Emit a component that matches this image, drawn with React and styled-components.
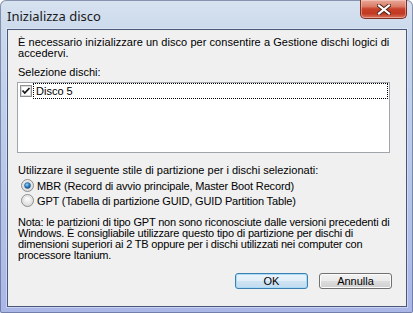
import React from "react";
import styled, { createGlobalStyle } from "styled-components";

const GlobalStyle = createGlobalStyle`
  html, body {
    margin: 0;
    padding: 0;
    background: #ffffff;
  }
`;

const Window = styled.div`
  width: 413px;
  height: 313px;
  box-sizing: border-box;
  display: flex;
  flex-direction: column;
  padding: 0 6px 6px 7px;
  border-radius: 6px 6px 2px 2px;
  background: linear-gradient(180deg, #d7e2ef 0%, #c9d8ec 12%, #bccbea 45%, #aab6e6 100%);
  box-shadow: inset 0 0 0 1px rgba(70, 82, 120, 0.55);
  font-family: "Liberation Sans", Arial, sans-serif;
`;

const TitleBar = styled.div`
  height: 29px;
  flex: none;
  display: flex;
  align-items: flex-start;
`;

const Title = styled.span`
  margin-top: 8px;
  font-family: "Noto Sans", "Open Sans", sans-serif;
  font-size: 13px;
  line-height: 16px;
  color: #1a1a1a;
`;

const CloseButton = styled.div`
  margin-left: auto;
  width: 47px;
  height: 19px;
  box-sizing: border-box;
  display: flex;
  align-items: center;
  justify-content: center;
  border: 1px solid #7c2f22;
  border-top: none;
  border-radius: 0 0 5px 5px;
  background: linear-gradient(180deg, #e9a999 0%, #dc7e69 35%, #c8412a 50%, #c23a22 75%, #d8735d 100%);
  box-shadow: inset 0 0 0 1px rgba(255, 220, 210, 0.45);
`;

const Client = styled.div`
  flex: 1;
  display: flex;
  flex-direction: column;
  box-sizing: border-box;
  padding: 7px 16px 0 9px;
  background: #f0f0f0;
  border: 1px solid #4a5878;
  box-shadow: 0 0 0 1px rgba(230, 235, 255, 0.55);
`;

const Text = styled.div`
  padding-left: 1px;
  font-size: 11px;
  line-height: 11px;
  color: #000000;
  white-space: nowrap;
  letter-spacing: ${(p) => p.$ls || 0}px;
  margin-top: ${(p) => p.$mt || 0}px;
`;

const ListBox = styled.div`
  margin-top: 4px;
  height: 71px;
  box-sizing: border-box;
  border: 1px solid #a0a4ab;
  background: #ffffff;
  padding: 0 1px 0 2px;
`;

const ListRow = styled.div`
  display: flex;
  align-items: center;
  height: 16px;
  gap: 1px;
`;

const FocusLabel = styled.div`
  flex: 1;
  height: 16px;
  box-sizing: border-box;
  border: 1px dotted #000000;
  padding-left: 2px;
  font-size: 11px;
  line-height: 14px;
`;

const RadioRow = styled.div`
  display: flex;
  align-items: center;
  height: 15px;
  gap: 3px;
  padding-left: 4px;
  font-size: 11px;
  letter-spacing: -0.15px;
  white-space: nowrap;
  margin-top: ${(p) => p.$mt || 0}px;
`;

const ButtonRow = styled.div`
  display: flex;
  justify-content: flex-end;
  gap: 11px;
  margin-top: 12px;
  margin-right: -2px;
`;

const Button = styled.div`
  width: 73px;
  height: 16px;
  box-sizing: border-box;
  display: flex;
  align-items: center;
  justify-content: center;
  border: 1px solid ${(p) => (p.$default ? "#3c7fb1" : "#707070")};
  border-radius: 3px;
  font-size: 11px;
  color: #000000;
  background: ${(p) =>
    p.$default
      ? "linear-gradient(180deg, #eaf4fb 0%, #e2eef8 48%, #cfe3f3 52%, #c4dcf0 100%)"
      : "linear-gradient(180deg, #f2f2f2 0%, #ebebeb 48%, #dddddd 52%, #cfcfcf 100%)"};
  box-shadow: inset 0 0 0 1px ${(p) => (p.$default ? "#a9dcf6" : "#fcfcfc")};
`;

function CheckBox() {
  return (
    <svg width="12" height="12" viewBox="0 0 12 12">
      <rect x="0.5" y="0.5" width="11" height="11" fill="#f4f4f4" stroke="#8e8f8f" />
      <rect x="1.5" y="1.5" width="9" height="9" fill="#ffffff" stroke="#dcdcdc" />
      <path d="M2.5 5.5 L4.8 8 L9.5 3" fill="none" stroke="#1a1a1a" strokeWidth="1.8" />
    </svg>
  );
}

function Radio({ checked }) {
  return (
    <svg width="13" height="13" viewBox="0 0 13 13">
      <defs>
        <radialGradient id="rbg" cx="50%" cy="35%" r="65%">
          <stop offset="0%" stopColor="#ffffff" />
          <stop offset="100%" stopColor="#d8d8d8" />
        </radialGradient>
        <radialGradient id="rdot" cx="40%" cy="35%" r="70%">
          <stop offset="0%" stopColor="#9ad3f6" />
          <stop offset="55%" stopColor="#2a7fc4" />
          <stop offset="100%" stopColor="#0d4a86" />
        </radialGradient>
      </defs>
      <circle cx="6.5" cy="6.5" r="6" fill="url(#rbg)" stroke="#8d8d8d" />
      <circle cx="6.5" cy="6.5" r="4.3" fill="none" stroke="#e2e2e2" />
      {checked && <circle cx="6.5" cy="6.5" r="3" fill="url(#rdot)" stroke="#2c5d8a" strokeWidth="0.6" />}
    </svg>
  );
}

function CloseGlyph() {
  return (
    <svg width="14" height="11" viewBox="0 0 14 11">
      <path d="M2 1.5 L12 9.5 M12 1.5 L2 9.5" stroke="#4a2018" strokeWidth="4" strokeLinecap="square" />
      <path d="M2 1.5 L12 9.5 M12 1.5 L2 9.5" stroke="#ffffff" strokeWidth="2.2" strokeLinecap="square" />
    </svg>
  );
}

export default function App() {
  return (
    <>
      <GlobalStyle />
      <Window>
        <TitleBar>
          <Title>Inizializza disco</Title>
          <CloseButton>
            <CloseGlyph />
          </CloseButton>
        </TitleBar>
        <Client>
          <Text $ls={0.05}>
            È necessario inizializzare un disco per consentire a Gestione dischi logici di
            <br />
            accedervi.
          </Text>
          <Text $mt={8}>Selezione dischi:</Text>
          <ListBox>
            <ListRow>
              <CheckBox />
              <FocusLabel>Disco 5</FocusLabel>
            </ListRow>
          </ListBox>
          <Text $mt={12}>Utilizzare il seguente stile di partizione per i dischi selezionati:</Text>
          <RadioRow $mt={2}>
            <Radio checked />
            MBR (Record di avvio principale, Master Boot Record)
          </RadioRow>
          <RadioRow>
            <Radio />
            GPT (Tabella di partizione GUID, GUID Partition Table)
          </RadioRow>
          <Text $mt={9} $ls={-0.18}>
            Nota: le partizioni di tipo GPT non sono riconosciute dalle versioni precedenti di
            <br />
            Windows. È consigliabile utilizzare questo tipo di partizione per dischi di
            <br />
            dimensioni superiori ai 2 TB oppure per i dischi utilizzati nei computer con
            <br />
            processore Itanium.
          </Text>
          <ButtonRow>
            <Button $default>OK</Button>
            <Button>Annulla</Button>
          </ButtonRow>
        </Client>
      </Window>
    </>
  );
}
